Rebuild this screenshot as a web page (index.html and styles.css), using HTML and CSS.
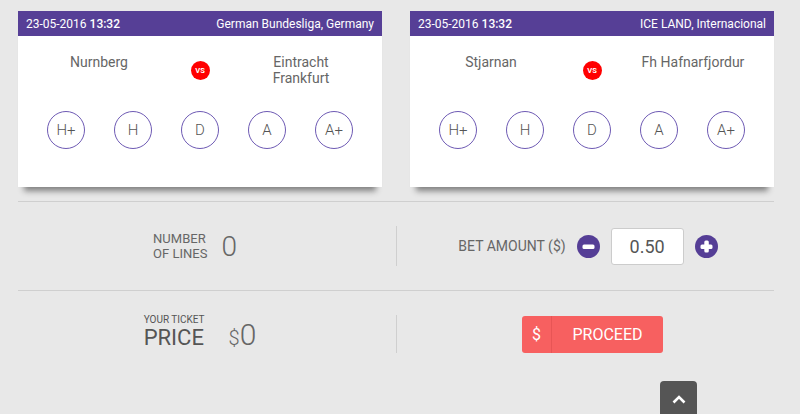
FILE: index.html
```html
<!DOCTYPE html>
<html lang="en">
<head>
  <meta charset="UTF-8" />
  <meta name="viewport" content="width=device-width, initial-scale=1.0" />
  <title>Bet Slip</title>
  <link rel="stylesheet" href="styles.css">
</head>
<body>
  <div class="wrap">
    <div class="matches">
      <div class="card">
        <div class="card-head">
          <span>23-05-2016 <b>13:32</b></span>
          <span>German Bundesliga, Germany</span>
        </div>
        <div class="card-body">
          <div class="teams">
            <div class="team">Nurnberg</div>
            <div class="vs">VS</div>
            <div class="team">Eintracht<br>Frankfurt</div>
          </div>
          <div class="picks">
            <span class="pick">H+</span>
            <span class="pick">H</span>
            <span class="pick">D</span>
            <span class="pick">A</span>
            <span class="pick">A+</span>
          </div>
        </div>
      </div>

      <div class="card">
        <div class="card-head">
          <span>23-05-2016 <b>13:32</b></span>
          <span>ICE LAND, Internacional</span>
        </div>
        <div class="card-body">
          <div class="teams">
            <div class="team">Stjarnan</div>
            <div class="vs">VS</div>
            <div class="team">Fh Hafnarfjordur</div>
          </div>
          <div class="picks">
            <span class="pick">H+</span>
            <span class="pick">H</span>
            <span class="pick">D</span>
            <span class="pick">A</span>
            <span class="pick">A+</span>
          </div>
        </div>
      </div>
    </div>

    <div class="summary">
      <div class="row">
        <div class="cell left">
          <div class="label">Number<br>of lines</div>
          <div class="big">0</div>
        </div>
        <div class="cell right">
          <span class="bet-label">Bet amount ($)</span>
          <button class="round-btn" aria-label="Decrease">
            <svg width="23" height="23" viewBox="0 0 23 23"><circle cx="11.5" cy="11.5" r="11.5" fill="#553e96"/><rect x="5.5" y="9.5" width="12" height="4.5" rx="1.5" fill="#fff"/></svg>
          </button>
          <input class="amount" type="text" value="0.50" />
          <button class="round-btn" aria-label="Increase">
            <svg width="23" height="23" viewBox="0 0 23 23"><circle cx="11.5" cy="11.5" r="11.5" fill="#553e96"/><rect x="5.5" y="9.5" width="12" height="4.5" rx="1.5" fill="#fff"/><rect x="9.3" y="5.5" width="4.5" height="12" rx="1.5" fill="#fff"/></svg>
          </button>
        </div>
      </div>
      <div class="row">
        <div class="cell left">
          <div class="price-label"><small>Your ticket</small><span>Price</span></div>
          <div class="price"><span>$</span>0</div>
        </div>
        <div class="cell right">
          <button class="proceed"><span class="dollar">$</span><span class="go">Proceed</span></button>
        </div>
      </div>
    </div>
  </div>

  <a class="to-top" href="#" aria-label="Back to top">
    <svg width="14" height="9" viewBox="0 0 14 9"><polyline points="1.5,7.5 7,2 12.5,7.5" fill="none" stroke="#fff" stroke-width="2.6"/></svg>
  </a>
</body>
</html>
```

FILE: styles.css
```css
body {
  font-family: Roboto, 'Liberation Sans', Arial, sans-serif;
  margin: 0;
  background: #e8e8e8;
  color: #555;
}
.wrap {
  width: 756px;
  margin-left: 18px;
  padding-top: 11px;
}
.matches {
  display: flex;
  gap: 28px;
}
.card {
  width: 364px;
  background: #fff;
  box-shadow: 0 10px 6px -6px rgba(0, 0, 0, 0.45);
}
.card-head {
  display: flex;
  justify-content: space-between;
  align-items: center;
  height: 25px;
  padding: 0 8px;
  background: #563f96;
  color: #fff;
  font-size: 12px;
}
.card-head b {
  font-weight: 500;
}
.card-body {
  padding: 18px 0 38px;
}
.teams {
  display: grid;
  grid-template-columns: 162px 40px 162px;
  height: 34px;
  align-items: start;
}
.team {
  text-align: center;
  font-size: 14px;
  line-height: 16px;
  color: #666;
}
.vs {
  justify-self: center;
  align-self: center;
  margin-top: -2px;
  width: 19px;
  height: 19px;
  border-radius: 50%;
  background: #f00;
  color: #fff;
  font-size: 7.5px;
  font-weight: 700;
  line-height: 19px;
  text-align: center;
}
.picks {
  display: flex;
  justify-content: center;
  gap: 29px;
  margin-top: 23px;
}
.pick {
  width: 36px;
  height: 36px;
  border: 1px solid #6e5ab4;
  border-radius: 50%;
  display: flex;
  align-items: center;
  justify-content: center;
  font-size: 15px;
  font-weight: 300;
  color: #555;
}
.summary {
  margin-top: 14px;
}
.row {
  display: grid;
  grid-template-columns: 1fr 1fr;
  border-top: 1px solid #cfcfcf;
  padding: 24px 0;
}
.cell {
  display: flex;
  align-items: center;
  justify-content: center;
  height: 40px;
}
.row + .row .cell {
  height: 38px;
}
.left {
  padding-right: 24px;
}
.right {
  border-left: 1px solid #cfcfcf;
  padding-left: 16px;
}
.label {
  font-size: 13px;
  line-height: 15px;
  text-transform: uppercase;
  color: #666;
}
.big {
  margin-left: 14px;
  font-size: 28px;
  font-weight: 300;
  color: #666;
}
.bet-label {
  font-size: 14px;
  text-transform: uppercase;
  color: #666;
}
.round-btn {
  border: 0;
  padding: 0;
  background: none;
  width: 23px;
  height: 23px;
  margin: 0 11px;
  display: block;
}
.amount {
  width: 71px;
  height: 35px;
  padding: 0;
  border: 1px solid #ccc;
  border-radius: 3px;
  text-align: center;
  font-family: inherit;
  font-size: 18px;
  color: #555;
}
.price-label {
  text-transform: uppercase;
  color: #555;
  margin: -6px 0 0 10px;
}
.price-label small {
  display: block;
  font-size: 10px;
  line-height: 10px;
  margin-bottom: 3px;
}
.price-label span {
  display: block;
  font-size: 22px;
  line-height: 19px;
}
.price {
  margin-left: 24px;
  font-size: 30px;
  font-weight: 300;
  color: #666;
}
.price span {
  font-size: 20px;
}
.proceed {
  display: flex;
  align-items: stretch;
  width: 141px;
  height: 37px;
  margin-left: -2px;
  padding: 0;
  border: 0;
  border-radius: 3px;
  background: #f76060;
  color: #fff;
  font-family: inherit;
  font-size: 16px;
  text-transform: uppercase;
}
.dollar {
  width: 29px;
  border-right: 1px solid #e85555;
  display: flex;
  align-items: center;
  justify-content: center;
}
.go {
  flex: 1;
  display: flex;
  align-items: center;
  justify-content: center;
}
.to-top {
  position: fixed;
  right: 103px;
  bottom: -8px;
  width: 37px;
  height: 41px;
  border-radius: 4px;
  background: #555;
  display: flex;
  justify-content: center;
  padding-top: 14px;
  box-sizing: border-box;
}
```
